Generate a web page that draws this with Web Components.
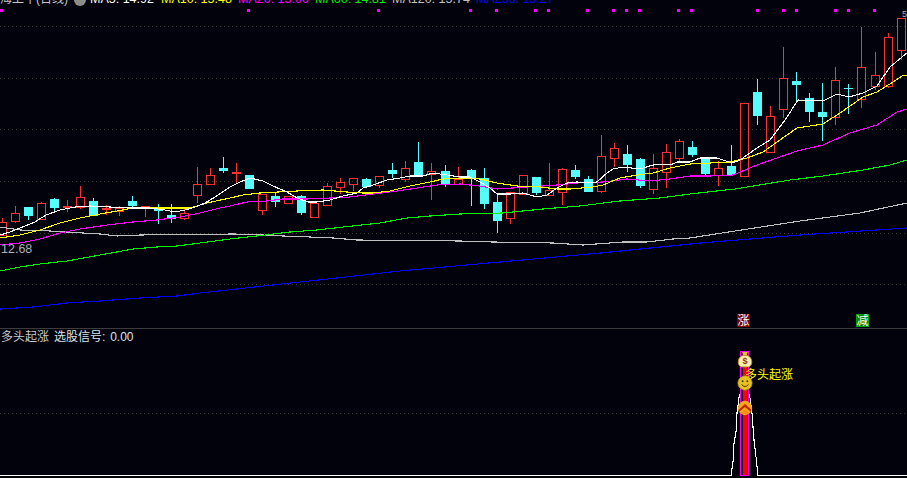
<!DOCTYPE html>
<html lang="zh">
<head>
<meta charset="utf-8">
<title>K线</title>
<style>
html,body{margin:0;padding:0;background:#02020c;}
body{width:907px;height:478px;overflow:hidden;font:12px "Liberation Sans","Noto Sans CJK SC",sans-serif;}
</style>
</head>
<body>
<kline-app></kline-app>
<script>
const C={bg:'#02020c',red:'#ff3232',cyan:'#54fcfc',white:'#ffffff',yellow:'#ffff00',magenta:'#ff00ff',green:'#00f000',gray:'#c0c0c0',blue:'#0000ff',grid:'#3a3a32'};
const FONT='"Liberation Sans","Noto Sans CJK SC",sans-serif';
const candles=[
['r',218,222,235,235],['r',206,213,221,223],['c',207,207,216,220],['r',202,203,219,219],['c',198,199,208,212],
['f',200,206,208,212],['r',186,197,207,209],['c',198,201,216,216],['f',205,208,210,215],['r',206,208,211,216],
['c',196,201,206,208],['f',206,206,209,217],['c',204,208,211,224],['c',204,215,219,223],['r',209,213,218,220],
['r',167,184,195,203],['r',168,175,184,184],['c',157,168,171,173],['f',163,172,174,183],['c',175,175,189,189],
['r',194,194,210,215],['c',192,196,202,207],['r',196,196,203,204],['c',195,196,213,215],['r',203,203,217,217],
['r',183,186,205,206],['r',178,182,187,194],['r',178,178,184,191],['c',178,179,187,187],['r',176,176,185,188],
['c',163,170,174,178],['r',161,168,179,182],['c',142,162,176,176],['r',163,171,174,200],['c',165,171,185,187],
['r',167,179,184,184],['c',169,170,178,206],['c',168,178,204,209],['c',193,202,221,233],['r',192,192,218,224],
['r',175,175,194,194],['c',177,177,193,195],['r',163,190,195,195],['r',168,169,192,205],['c',165,170,177,179],
['c',176,179,192,192],['r',135,156,191,193],['r',143,148,158,167],['c',145,154,165,172],['c',158,159,186,188],
['r',154,168,189,194],['r',144,152,172,188],['r',139,141,158,162],['c',141,147,155,157],['c',157,157,174,176],
['r',161,168,175,186],['c',145,166,175,175],['r',103,103,176,177],['c',79,92,116,125],['r',106,116,152,152],
['r',47,78,109,118],['c',72,81,85,103],['c',93,98,112,122],['c',83,112,117,141],['r',67,80,117,125],
['c',84,88,89,114],['r',27,67,99,108],['r',52,75,86,90],['r',33,37,86,88],['r',18,18,50,60]
];
const xOf=k=>Math.round(13.03*k+1.5);
const lines={
white:[[0,235],[10,232],[20,228],[35,222],[46,215],[60,210],[75,207],[90,206],[110,207],[130,208],[150,208],[165,210],[175,212],[185,210],[195,207],[205,203],[215,197],[230,187],[240,182],[250,178],[263,181],[273,186],[287,192],[297,198],[308,202],[317,202],[330,200],[343,196],[357,193],[363,188],[373,185],[387,180],[400,178],[410,176],[423,176],[433,173],[447,175],[460,177],[470,177],[480,182],[490,188],[497,194],[510,194],[523,193],[537,197],[547,195],[557,188],[567,183],[577,182],[587,183],[597,182],[607,173],[613,169],[623,167],[640,169],[653,165],[673,164],[677,162],[690,162],[700,158],[717,158],[732,163],[740,160],[757,148],[770,140],[785,120],[798,100],[823,101],[837,94],[849,97],[863,93],[877,86],[890,67],[902,57],[907,53]],
yellow:[[0,238],[20,235],[40,230],[60,223],[80,218],[100,214],[117,211],[133,208],[167,208],[190,208],[207,203],[230,198],[243,195],[260,193],[278,192],[297,191],[323,190],[347,192],[363,193],[373,193],[390,191],[410,186],[430,182],[443,179],[460,178],[480,179],[497,183],[517,186],[540,187],[557,189],[570,189],[593,187],[603,185],[620,178],[637,175],[653,173],[670,168],[690,164],[710,163],[730,162],[747,158],[763,152],[777,142],[797,128],[823,124],[840,113],[863,97],[877,92],[893,82],[902,76],[907,75]],
magenta:[[0,245],[20,243],[40,239],[60,233],[80,229],[107,225],[133,222],[157,220],[180,217],[200,213],[220,208],[230,206],[247,202],[267,201],[283,199],[307,199],[330,198],[350,197],[373,194],[397,191],[417,188],[437,185],[460,184],[480,186],[497,189],[527,187],[557,185],[577,183],[603,182],[627,179],[650,181],[670,179],[690,176],[710,176],[733,175],[757,165],[797,151],[823,145],[850,133],[877,125],[897,112],[907,109]],
green:[[0,271],[20,267],[40,264],[67,261],[100,255],[133,249],[157,247],[177,246],[200,243],[230,239],[257,236],[290,232],[317,230],[343,227],[380,223],[407,218],[430,216],[460,214],[503,213],[543,209],[580,206],[620,201],[660,198],[690,194],[735,189],[790,180],[823,176],[863,170],[890,165],[907,160]],
gray:[[0,227],[20,230],[50,231],[83,233],[100,234],[117,236],[140,235],[234,234],[263,235],[283,236],[310,237],[333,238],[357,240],[460,241],[493,242],[553,243],[583,245],[623,242],[647,242],[673,239],[690,238],[735,231],[800,221],[860,213],[907,203]],
blue:[[0,309],[33,307],[67,303],[100,301],[140,298],[177,296],[200,293],[300,282],[400,271],[500,262],[600,253],[700,243],[800,235],[907,228]]
};
const dots=[1,248,378,470,496,535,548,587,613,626,639,678,691,757,783,796,835,848,874];
const legend=[['MA5: 14.92',C.white,90],['MA10: 15.48',C.yellow,161],['MA20: 15.00',C.magenta,238],['MA60: 14.81',C.green,315],['MA120: 15.74',C.gray,392],['MA250: 15.27',C.blue,476]];

class ChartLegend extends HTMLElement{
  constructor(){super();const r=this.attachShadow({mode:'open'});
    r.innerHTML=`<style>
      :host{display:flex;position:absolute;left:0;top:-8px;height:15px;align-items:center;font:12.5px/15px ${FONT};white-space:nowrap;color:#c8c8c8}
      .t{width:74px;flex:none;font-size:12px}
      .dot{width:12px;height:12px;border-radius:50%;background:#8c8c8c;flex:none;margin:1px 4px 0 0}
      .m{flex:none}
    </style><span class="t">海上牛(日线)</span><span class="dot"></span>`+
    legend.map((l,i)=>`<span class="m" style="color:${l[1]};width:${i<5?legend[i+1][2]-l[2]:90}px">${l[0]}</span>`).join('');}
}
customElements.define('chart-legend',ChartLegend);

class PricePanel extends HTMLElement{
  constructor(){super();const r=this.attachShadow({mode:'open'});
    let s='';
    [26,78,129,181,233,284].forEach(y=>s+=`<line x1="0" x2="907" y1="${y+.5}" y2="${y+.5}" stroke="${C.grid}" stroke-dasharray="1 3"/>`);
    dots.forEach(x=>s+=`<rect x="${x-1}" y="9" width="3" height="3" fill="${C.magenta}"/>`);
    candles.forEach((c,k)=>{const x=xOf(k),[t,h,a,b,l]=c;
      const col=t==='c'?C.cyan:C.red;
      if(a>h)s+=`<rect x="${x}" y="${h}" width="1" height="${a-h}" fill="${col}"/>`;
      if(l>b)s+=`<rect x="${x}" y="${b}" width="1" height="${l-b}" fill="${col}"/>`;
      if(t==='r')s+=`<rect x="${x-3.5}" y="${a+.5}" width="8" height="${Math.max(b-a,1)}" fill="none" stroke="${col}"/>`;
      else s+=`<rect x="${x-4}" y="${a}" width="9" height="${Math.max(b-a,1)}" fill="${col}"/>`;
    });
    for(const n of ['gray','blue','green','magenta','yellow','white'])
      s+=`<polyline fill="none" stroke="${C[n]}" stroke-width="1.1" points="${lines[n].map(p=>p.join(',')).join(' ')}"/>`;
    s+=`<text x="902" y="17" font-size="9" fill="#b0b0b0">5</text>`;
    s+=`<text x="1" y="253" font-size="12.5" fill="#a8b0b8">12.68</text>`;
    s+=`<rect x="737" y="314" width="13" height="13" fill="#800000"/><text x="743.5" y="325" text-anchor="middle" font-size="12" fill="#fff">涨</text>`;
    s+=`<rect x="856.5" y="314.5" width="12" height="12" fill="#008000" stroke="#00a000"/><text x="862.5" y="325" text-anchor="middle" font-size="12" fill="#fff">减</text>`;
    r.innerHTML=`<style>
      :host{display:block;position:relative;height:328px;overflow:hidden}
      svg{display:block;width:907px;height:328px;font-family:${FONT}}
      line,rect,polyline{shape-rendering:crispEdges}
    </style><svg viewBox="0 0 907 328">${s}</svg><slot></slot>`;}
}
customElements.define('price-panel',PricePanel);

class IndicatorPanel extends HTMLElement{
  constructor(){super();const r=this.attachShadow({mode:'open'});
    r.innerHTML=`<style>
      :host{display:block;position:relative;height:150px;border-top:1px solid #3c3c3c;box-sizing:border-box;overflow:hidden}
      .title{position:relative;display:flex;gap:5px;padding:1px 0 0 1px;font:12px/15px ${FONT};color:#c8c8c8}
      .v{color:#d8e4ec;word-spacing:1.5px}
      svg{position:absolute;left:0;top:0;width:907px;height:149px;font-family:${FONT}}
      line,rect,polyline{shape-rendering:crispEdges}
    </style>
    <svg viewBox="0 329 907 149">
      <line x1="0" x2="907" y1="413.5" y2="413.5" stroke="${C.grid}" stroke-dasharray="1 3"/>
      <polyline fill="none" stroke="#fff" stroke-width="1.1" points="0,475.5 731,475.5 733,462 734,443 736,432 737,413 739.5,394"/>
      <polyline fill="none" stroke="#fff" stroke-width="1.1" points="749.5,394 752,413 753,427 754,440 756,457 758,475.5 907,475.5"/>
      <rect x="740" y="351" width="9" height="1" fill="${C.magenta}"/>
      <rect x="740" y="351" width="1" height="125" fill="${C.magenta}"/>
      <rect x="748" y="351" width="1" height="125" fill="${C.magenta}"/>
      <rect x="740" y="475" width="9" height="1" fill="${C.magenta}"/>
      <rect x="743" y="353" width="4" height="122" fill="#ff0000"/>
      <text x="745" y="378.5" font-size="12" fill="#ffff00">多头起涨</text>
      <g transform="translate(745,360) scale(1.15)">
        <path d="M-2.5,-7 h5 l-1,3 h-3 z" fill="#f0c020"/>
        <path d="M-2,-4 C-7,-2 -7,5 -3,6 h6 C7,5 7,-2 2,-4 z" fill="#fdf0b0" stroke="#c89020" stroke-width=".8"/>
        <text x="0" y="3.5" text-anchor="middle" font-size="8" font-weight="700" fill="#8a3a30">$</text>
      </g>
      <g transform="translate(745,383)">
        <circle r="7.2" fill="#e8c020" stroke="#a88810" stroke-width=".6"/>
        <circle cx="-2.4" cy="-1.8" r="1" fill="#4a3a00"/><circle cx="2.4" cy="-1.8" r="1" fill="#4a3a00"/>
        <path d="M-3.5,1.5 Q0,5.5 3.5,1.5" fill="none" stroke="#4a3a00" stroke-width="1"/>
      </g>
      <g transform="translate(745,408)">
        <circle r="7.2" fill="#f8a818"/>
        <path d="M-6,1.5 L0,-4 L6,1.5 L6,4 L0,-1 L-6,4 z" fill="#c02010"/>
        <path d="M-4,5 Q0,7.2 4,5 L0,1.5 z" fill="#ff8c10"/>
      </g>
    </svg>
    <div class="title"><span>多头起涨</span><span class="v">选股信号: 0.00</span></div>`;}
}
customElements.define('indicator-panel',IndicatorPanel);

class KlineApp extends HTMLElement{
  constructor(){super();const r=this.attachShadow({mode:'open'});
    r.innerHTML=`<style>
      :host{display:flex;flex-direction:column;position:relative;width:907px;height:478px;background:${C.bg};overflow:hidden}
    </style><price-panel><chart-legend></chart-legend></price-panel><indicator-panel></indicator-panel>`;}
}
customElements.define('kline-app',KlineApp);
</script>
</body>
</html>
